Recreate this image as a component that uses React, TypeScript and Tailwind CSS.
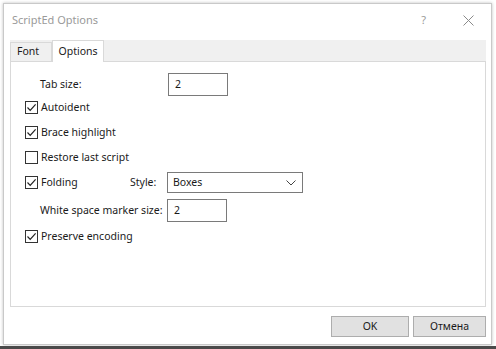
import React from "react";

const font = { fontFamily: '"Segoe UI", "Noto Sans", "Open Sans", sans-serif' };

function Check({ checked }: { checked: boolean }) {
  return (
    <div className="w-[13px] h-[13px] border border-[#333333] bg-white flex items-center justify-center shrink-0">
      {checked && (
        <svg width="11" height="11" viewBox="0 0 11 11">
          <path d="M1.5 5.5 L4.2 8.3 L9.6 2.4" stroke="#222" strokeWidth="1.2" fill="none" />
        </svg>
      )}
    </div>
  );
}

function CheckRow({ checked, label }: { checked: boolean; label: string }) {
  return (
    <div className="flex items-center gap-[3px] h-[20px]">
      <Check checked={checked} />
      <span className="text-[10.5px] text-[#1a1a1a] leading-none">{label}</span>
    </div>
  );
}

export default function App() {
  return (
    <div className="w-[496px] h-[349px] bg-white flex flex-col" style={font}>
      <div className="flex-1 pt-[3px] pl-[3px] pr-[4px]">
        <div className="h-full border border-[#c9c9c9] bg-white flex flex-col shadow-[0_0_3px_rgba(0,0,0,0.25)]">
          {/* title bar */}
          <div className="h-[33px] flex items-center pl-[8px] pr-[17px]">
            <span className="text-[11px] text-[#9a9a9a]">ScriptEd Options</span>
            <div className="flex-1" />
            <span className="text-[11px] text-[#9a9a9a] mr-[37px]">?</span>
            <svg width="11" height="11" viewBox="0 0 11 11">
              <path d="M0.5 0.5 L10.5 10.5 M10.5 0.5 L0.5 10.5" stroke="#8a8a8a" strokeWidth="1" />
            </svg>
          </div>
          {/* tabs */}
          <div className="mt-[3px] ml-[6px] mr-[5px] flex flex-col">
            <div className="h-[21px] bg-[#f0f0f0] flex items-end">
              <div className="h-[19px] w-[42px] border border-b-0 border-[#d9d9d9] bg-[#f0f0f0] flex items-center pl-[6px] text-[10.5px] text-[#1a1a1a]">
                Font
              </div>
              <div className="h-[22px] w-[52px] -mb-[1px] border border-b-0 border-[#d9d9d9] bg-white flex items-center justify-center text-[10.5px] text-[#1a1a1a] relative z-10">
                Options
              </div>
            </div>
            <div className="h-[246px] border border-[#d9d9d9] bg-white pl-[14px] pt-[11px] flex flex-col">
              <div className="flex items-center h-[23px] pl-[15px]">
                <span className="w-[128px] text-[10.5px] text-[#1a1a1a]">Tab size:</span>
                <div className="w-[60px] h-[23px] border border-[#7a7a7a] flex items-center pl-[6px] text-[10.5px] text-[#1a1a1a]">2</div>
              </div>
              <div className="mt-[1px] flex flex-col gap-[5px]">
                <CheckRow checked label="Autoident" />
                <CheckRow checked label="Brace highlight" />
                <CheckRow checked={false} label="Restore last script" />
              </div>
              <div className="mt-[5px] flex items-center h-[21px]">
                <div className="w-[105px]">
                  <CheckRow checked label="Folding" />
                </div>
                <span className="w-[37px] text-[10.5px] text-[#1a1a1a]">Style:</span>
                <div className="w-[136px] h-[21px] border border-[#7a7a7a] flex items-center pl-[5px] pr-[6px] text-[10.5px] text-[#1a1a1a]">
                  <span className="flex-1">Boxes</span>
                  <svg width="10" height="6" viewBox="0 0 10 6">
                    <path d="M0.5 0.5 L5 5 L9.5 0.5" stroke="#444" strokeWidth="1" fill="none" />
                  </svg>
                </div>
              </div>
              <div className="mt-[6px] flex items-center h-[23px] pl-[15px]">
                <span className="w-[127px] text-[10.5px] text-[#1a1a1a]">White space marker size:</span>
                <div className="w-[60px] h-[23px] border border-[#7a7a7a] flex items-center pl-[6px] text-[10.5px] text-[#1a1a1a]">2</div>
              </div>
              <div className="mt-[4px]">
                <CheckRow checked label="Preserve encoding" />
              </div>
            </div>
          </div>
          {/* buttons */}
          <div className="mt-[9px] mr-[5px] flex justify-end gap-[4px]">
            <div className="w-[78px] h-[21px] bg-[#e1e1e1] border border-[#adadad] flex items-center justify-center text-[10.5px] text-[#1a1a1a]">OK</div>
            <div className="w-[73px] h-[21px] bg-[#e1e1e1] border border-[#adadad] flex items-center justify-center text-[10.5px] text-[#1a1a1a]">Отмена</div>
          </div>
        </div>
      </div>
      <div className="h-[3px] mt-[1px] bg-[#4a4a4a]" />
    </div>
  );
}
